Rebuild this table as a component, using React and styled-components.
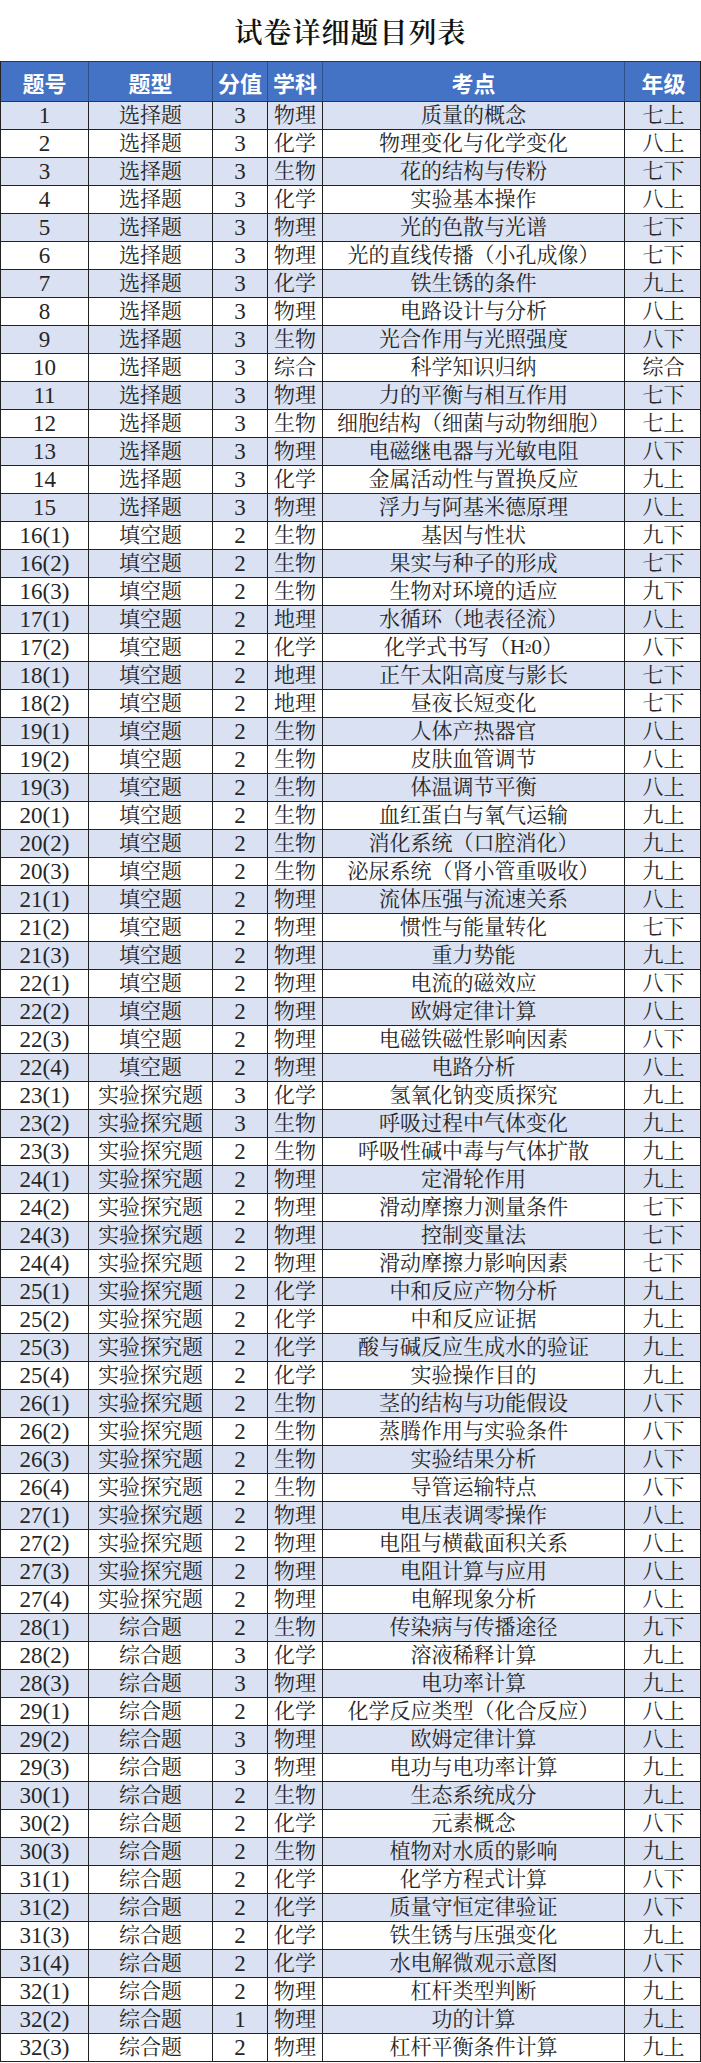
import React from 'react';
import styled, { createGlobalStyle } from 'styled-components';

const GlobalStyle = createGlobalStyle`
  html, body {
    margin: 0;
    padding: 0;
    background: #fff;
  }
`;

const COLS = '88px 124px 55px 55px 302px 77px';
const FONT = `"Liberation Serif", "Noto Serif CJK SC", "Noto Sans CJK SC", serif`;

const Page = styled.div`
  width: 701px;
  font-family: ${FONT};
  color: #262626;
`;

const Title = styled.h1`
  margin: 0;
  height: 61px;
  display: flex;
  align-items: center;
  justify-content: center;
  font-family: "Noto Serif CJK SC", "Noto Sans CJK SC", serif;
  font-size: 28px;
  font-weight: 600;
  letter-spacing: 1px;
  color: #111;
`;

const Table = styled.div`
  border-left: 1px solid #222;
  border-right: 1px solid #222;
`;

const HeadRow = styled.div`
  display: grid;
  grid-template-columns: ${COLS};
  height: 41px;
  box-sizing: border-box;
  background: #4472c4;
  border-top: 1px solid #1f3864;
  border-bottom: 1px solid #1f3864;
`;

const HeadCell = styled.div`
  display: flex;
  align-items: center;
  justify-content: center;
  color: #fff;
  font-family: "Noto Sans CJK SC", sans-serif;
  font-size: 22px;
  font-weight: 700;
  border-right: 1px solid #2f4f8a;
  &:last-child { border-right: none; }
`;

const Row = styled.div`
  display: grid;
  grid-template-columns: ${COLS};
  height: 28px;
  box-sizing: border-box;
  background: ${(p) => (p.$shaded ? '#d9e1f2' : '#fff')};
  border-bottom: 1px solid #222;
`;

const Cell = styled.div`
  display: flex;
  align-items: center;
  justify-content: center;
  white-space: nowrap;
  font-size: 21px;
  line-height: 1;
  border-right: 1px solid #222;
  &:last-child { border-right: none; }
`;

const Num = styled.span`
  font-family: "Liberation Serif", serif;
  font-size: 23px;
`;

const Sub = styled.span`
  font-size: 13px;
  vertical-align: -3px;
`;

const headers = ['题号', '题型', '分值', '学科', '考点', '年级'];

const rows = [
  ['1', '选择题', 3, '物理', '质量的概念', '七上'],
  ['2', '选择题', 3, '化学', '物理变化与化学变化', '八上'],
  ['3', '选择题', 3, '生物', '花的结构与传粉', '七下'],
  ['4', '选择题', 3, '化学', '实验基本操作', '八上'],
  ['5', '选择题', 3, '物理', '光的色散与光谱', '七下'],
  ['6', '选择题', 3, '物理', '光的直线传播（小孔成像）', '七下'],
  ['7', '选择题', 3, '化学', '铁生锈的条件', '九上'],
  ['8', '选择题', 3, '物理', '电路设计与分析', '八上'],
  ['9', '选择题', 3, '生物', '光合作用与光照强度', '八下'],
  ['10', '选择题', 3, '综合', '科学知识归纳', '综合'],
  ['11', '选择题', 3, '物理', '力的平衡与相互作用', '七下'],
  ['12', '选择题', 3, '生物', '细胞结构（细菌与动物细胞）', '七上'],
  ['13', '选择题', 3, '物理', '电磁继电器与光敏电阻', '八下'],
  ['14', '选择题', 3, '化学', '金属活动性与置换反应', '九上'],
  ['15', '选择题', 3, '物理', '浮力与阿基米德原理', '八上'],
  ['16(1)', '填空题', 2, '生物', '基因与性状', '九下'],
  ['16(2)', '填空题', 2, '生物', '果实与种子的形成', '七下'],
  ['16(3)', '填空题', 2, '生物', '生物对环境的适应', '九下'],
  ['17(1)', '填空题', 2, '地理', '水循环（地表径流）', '八上'],
  ['17(2)', '填空题', 2, '化学', 'H2O', '八下'],
  ['18(1)', '填空题', 2, '地理', '正午太阳高度与影长', '七下'],
  ['18(2)', '填空题', 2, '地理', '昼夜长短变化', '七下'],
  ['19(1)', '填空题', 2, '生物', '人体产热器官', '八上'],
  ['19(2)', '填空题', 2, '生物', '皮肤血管调节', '八上'],
  ['19(3)', '填空题', 2, '生物', '体温调节平衡', '八上'],
  ['20(1)', '填空题', 2, '生物', '血红蛋白与氧气运输', '九上'],
  ['20(2)', '填空题', 2, '生物', '消化系统（口腔消化）', '九上'],
  ['20(3)', '填空题', 2, '生物', '泌尿系统（肾小管重吸收）', '九上'],
  ['21(1)', '填空题', 2, '物理', '流体压强与流速关系', '八上'],
  ['21(2)', '填空题', 2, '物理', '惯性与能量转化', '七下'],
  ['21(3)', '填空题', 2, '物理', '重力势能', '九上'],
  ['22(1)', '填空题', 2, '物理', '电流的磁效应', '八下'],
  ['22(2)', '填空题', 2, '物理', '欧姆定律计算', '八上'],
  ['22(3)', '填空题', 2, '物理', '电磁铁磁性影响因素', '八下'],
  ['22(4)', '填空题', 2, '物理', '电路分析', '八上'],
  ['23(1)', '实验探究题', 3, '化学', '氢氧化钠变质探究', '九上'],
  ['23(2)', '实验探究题', 3, '生物', '呼吸过程中气体变化', '九上'],
  ['23(3)', '实验探究题', 2, '生物', '呼吸性碱中毒与气体扩散', '九上'],
  ['24(1)', '实验探究题', 2, '物理', '定滑轮作用', '九上'],
  ['24(2)', '实验探究题', 2, '物理', '滑动摩擦力测量条件', '七下'],
  ['24(3)', '实验探究题', 2, '物理', '控制变量法', '七下'],
  ['24(4)', '实验探究题', 2, '物理', '滑动摩擦力影响因素', '七下'],
  ['25(1)', '实验探究题', 2, '化学', '中和反应产物分析', '九上'],
  ['25(2)', '实验探究题', 2, '化学', '中和反应证据', '九上'],
  ['25(3)', '实验探究题', 2, '化学', '酸与碱反应生成水的验证', '九上'],
  ['25(4)', '实验探究题', 2, '化学', '实验操作目的', '九上'],
  ['26(1)', '实验探究题', 2, '生物', '茎的结构与功能假设', '八下'],
  ['26(2)', '实验探究题', 2, '生物', '蒸腾作用与实验条件', '八下'],
  ['26(3)', '实验探究题', 2, '生物', '实验结果分析', '八下'],
  ['26(4)', '实验探究题', 2, '生物', '导管运输特点', '八下'],
  ['27(1)', '实验探究题', 2, '物理', '电压表调零操作', '八上'],
  ['27(2)', '实验探究题', 2, '物理', '电阻与横截面积关系', '八上'],
  ['27(3)', '实验探究题', 2, '物理', '电阻计算与应用', '八上'],
  ['27(4)', '实验探究题', 2, '物理', '电解现象分析', '八上'],
  ['28(1)', '综合题', 2, '生物', '传染病与传播途径', '九下'],
  ['28(2)', '综合题', 3, '化学', '溶液稀释计算', '九上'],
  ['28(3)', '综合题', 3, '物理', '电功率计算', '九上'],
  ['29(1)', '综合题', 2, '化学', '化学反应类型（化合反应）', '八上'],
  ['29(2)', '综合题', 3, '物理', '欧姆定律计算', '八上'],
  ['29(3)', '综合题', 3, '物理', '电功与电功率计算', '九上'],
  ['30(1)', '综合题', 2, '生物', '生态系统成分', '九上'],
  ['30(2)', '综合题', 2, '化学', '元素概念', '八下'],
  ['30(3)', '综合题', 2, '生物', '植物对水质的影响', '九上'],
  ['31(1)', '综合题', 2, '化学', '化学方程式计算', '八下'],
  ['31(2)', '综合题', 2, '化学', '质量守恒定律验证', '八下'],
  ['31(3)', '综合题', 2, '化学', '铁生锈与压强变化', '九上'],
  ['31(4)', '综合题', 2, '化学', '水电解微观示意图', '八下'],
  ['32(1)', '综合题', 2, '物理', '杠杆类型判断', '九上'],
  ['32(2)', '综合题', 1, '物理', '功的计算', '九上'],
  ['32(3)', '综合题', 2, '物理', '杠杆平衡条件计算', '九上'],
];

// the one topic with a chemical formula gets a subscript
const Topic = ({ text }) =>
  text === 'H2O' ? (
    <>化学式书写（H<Sub>2</Sub>0）</>
  ) : (
    text
  );

const App = () => (
  <Page>
    <GlobalStyle />
    <Title>试卷详细题目列表</Title>
    <Table>
      <HeadRow>
        {headers.map((h) => (
          <HeadCell key={h}>{h}</HeadCell>
        ))}
      </HeadRow>
      {rows.map(([no, type, score, subject, topic, grade], i) => (
        <Row key={no} $shaded={i % 2 === 0}>
          <Cell><Num>{no}</Num></Cell>
          <Cell>{type}</Cell>
          <Cell><Num>{score}</Num></Cell>
          <Cell>{subject}</Cell>
          <Cell><Topic text={topic} /></Cell>
          <Cell>{grade}</Cell>
        </Row>
      ))}
    </Table>
  </Page>
);

export default App;
